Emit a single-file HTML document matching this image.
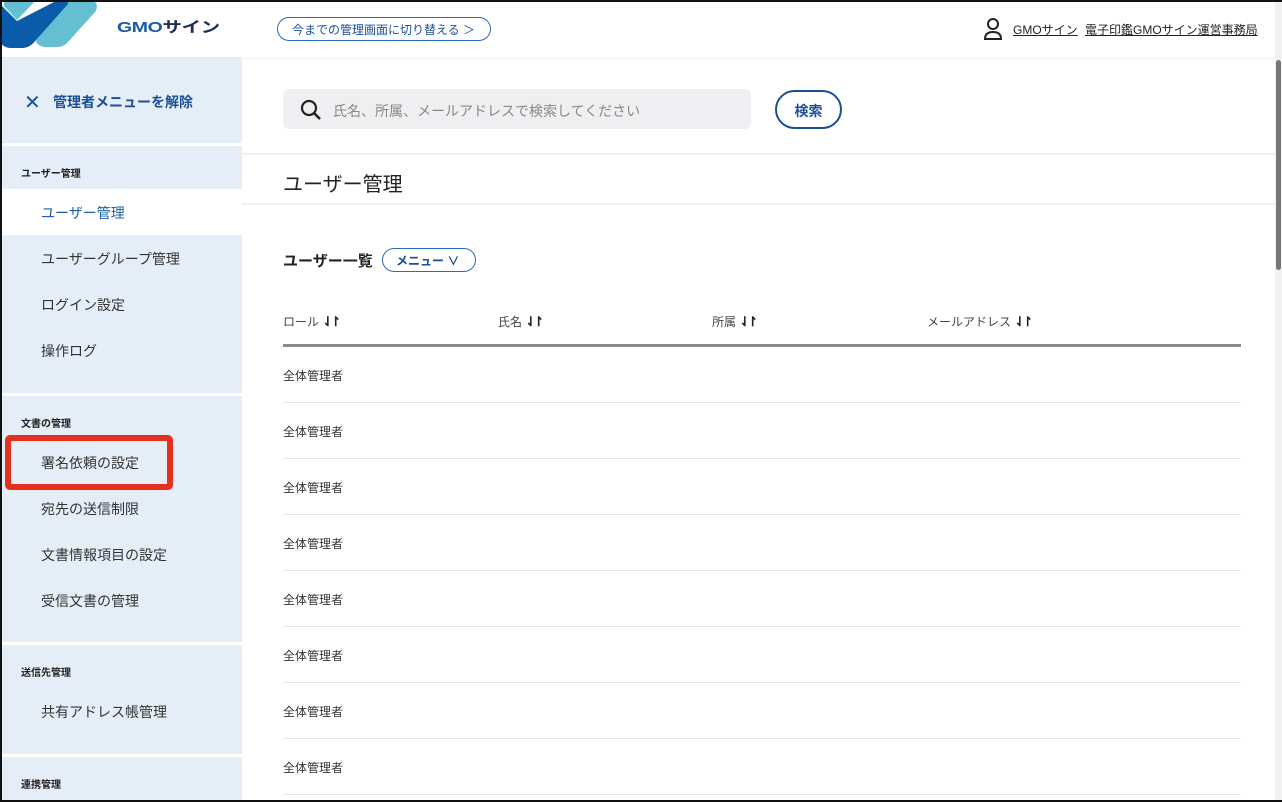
<!DOCTYPE html>
<html><head><meta charset="utf-8"><style>
*{box-sizing:border-box;margin:0;padding:0}
body{width:1282px;height:802px;overflow:hidden;background:#fff;font-family:"Liberation Sans","Noto Sans CJK JP",sans-serif;color:#222;position:relative}
.frame{position:absolute;inset:0;border:2px solid #111;border-right:none;pointer-events:none;z-index:10}
.hdr{position:absolute;left:0;top:0;width:1282px;height:57px;background:#fff;box-shadow:0 2px 4px rgba(0,0,0,.05)}
.side{position:absolute;left:0;top:57px;width:242px;height:745px;background:#e5eef7}
.sep{position:absolute;left:0;width:242px;height:3px;background:#fff}
.sh{position:absolute;left:21px;font-size:10px;font-weight:bold;color:#222}
.si{position:absolute;left:41px;font-size:14px;color:#333}
.row{position:absolute;left:283px;width:958px;border-bottom:1px solid #e6e6e6;height:56px}
.row span{position:absolute;left:0;top:20px;font-size:12px;color:#333}
.th{position:absolute;top:313px;font-size:12px;color:#444}
.th b{font-size:13px;color:#222;letter-spacing:-3px}
</style></head><body>
<div class="hdr">
<svg style="position:absolute;left:0;top:0" width="100" height="50" viewBox="0 0 100 50">
<path d="M66 0 L92 0 Q100 4 95 12 L68 42 Q64 47 56 47 L44 47 Q36 45 36 40 Z" fill="#63bfd1"/>
<path d="M4 0 L36 0 L17 20 L4 6 Z" fill="#63bfd1"/>
<path d="M0 4 L17 21 L58 0 L68 0 L68 4 L36 40 Q30 48 22 48 L10 48 Q0 47 0 38 Z" fill="#0a5ba8"/>
</svg>
<div style="position:absolute;left:117px;top:16px;font-size:15px;font-weight:bold;transform:scaleX(1.3);transform-origin:left;letter-spacing:-0.3px"><span style="color:#1a5aa8">GMO</span><span style="color:#1c2e55">サイン</span></div>
<div style="position:absolute;left:277px;top:17px;width:214px;height:24px;border:1.5px solid #2a6cb5;border-radius:12px;font-size:12px;color:#1a4f96;padding:3px 0 0 14px">今までの管理画面に切り替える ＞</div>
<svg style="position:absolute;left:983px;top:17px" width="20" height="24" viewBox="0 0 20 24"><circle cx="10" cy="7" r="5" fill="none" stroke="#222" stroke-width="2"/><path d="M2 22 Q2 15 10 15 Q18 15 18 22 Z" fill="none" stroke="#222" stroke-width="2"/></svg>
<div style="position:absolute;left:1013px;top:21px;font-size:12px;color:#222;text-decoration:underline">GMOサイン</div>
<div style="position:absolute;left:1085px;top:21px;font-size:12px;color:#222;text-decoration:underline">電子印鑑GMOサイン運営事務局</div>
</div>
<div style="position:absolute;right:0;top:0;width:7px;height:802px;background:#f1f1f1"><div style="position:absolute;left:1px;top:60px;width:5px;height:210px;background:#777;border-radius:3px"></div></div>
<div class="side">
<div style="position:absolute;left:24px;top:33px;font-size:20px;color:#1a4f96">✕</div>
<div style="position:absolute;left:53px;top:35px;font-size:14px;font-weight:bold;color:#1a4f96">管理者メニューを解除</div>
<div class="sep" style="top:86px"></div>
<div class="sh" style="top:108px">ユーザー管理</div>
<div style="position:absolute;left:0;top:132px;width:242px;height:46px;background:#fff"></div>
<div class="si" style="top:146px;color:#1a5fa8">ユーザー管理</div>
<div class="si" style="top:192px">ユーザーグループ管理</div>
<div class="si" style="top:238px">ログイン設定</div>
<div class="si" style="top:284px">操作ログ</div>
<div class="sep" style="top:336px"></div>
<div class="sh" style="top:358px">文書の管理</div>
<div class="si" style="top:396px">署名依頼の設定</div>
<div class="si" style="top:442px">宛先の送信制限</div>
<div class="si" style="top:488px">文書情報項目の設定</div>
<div class="si" style="top:534px">受信文書の管理</div>
<div class="sep" style="top:585px"></div>
<div class="sh" style="top:607px">送信先管理</div>
<div class="si" style="top:645px">共有アドレス帳管理</div>
<div class="sep" style="top:697px"></div>
<div class="sh" style="top:719px">連携管理</div>
</div>
<div style="position:absolute;left:5px;top:435px;width:168px;height:55px;border:6px solid #e3301f;border-radius:5px;z-index:5"></div>
<div style="position:absolute;left:283px;top:89px;width:468px;height:40px;background:#efeff1;border-radius:6px"></div>
<svg style="position:absolute;left:299px;top:98px" width="24" height="24" viewBox="0 0 24 24"><circle cx="10" cy="10" r="7" fill="none" stroke="#222" stroke-width="2.2"/><path d="M15 15 L21 21" stroke="#222" stroke-width="2.5"/></svg>
<div style="position:absolute;left:333px;top:101px;font-size:14px;color:#888">氏名、所属、メールアドレスで検索してください</div>
<div style="position:absolute;left:775px;top:90px;width:67px;height:39px;border:2px solid #1a4f96;border-radius:20px;font-size:14px;font-weight:bold;color:#1a4f96;text-align:center;padding-top:9px">検索</div>
<div style="position:absolute;left:242px;top:153px;width:1033px;height:2px;background:#eef0f2"></div>
<div style="position:absolute;left:283px;top:168px;font-size:20px;color:#222">ユーザー管理</div>
<div style="position:absolute;left:242px;top:203px;width:1033px;height:2px;background:#eef0f2"></div>
<div style="position:absolute;left:283px;top:250px;font-size:15px;font-weight:bold;color:#222">ユーザー一覧</div>
<div style="position:absolute;left:382px;top:248px;width:94px;height:24px;border:1.5px solid #2a6cb5;border-radius:12px;font-size:12px;font-weight:bold;color:#1a4f96;padding:3px 0 0 13px">メニュー ∨</div>
<div class="th" style="left:283px">ロール <b>⇃↾</b></div>
<div class="th" style="left:498px">氏名 <b>⇃↾</b></div>
<div class="th" style="left:712px">所属 <b>⇃↾</b></div>
<div class="th" style="left:927px">メールアドレス <b>⇃↾</b></div>
<div style="position:absolute;left:283px;top:344px;width:958px;height:3px;background:#8a8a8a"></div>
<div class="row" style="top:347px"><span>全体管理者</span></div>
<div class="row" style="top:403px"><span>全体管理者</span></div>
<div class="row" style="top:459px"><span>全体管理者</span></div>
<div class="row" style="top:515px"><span>全体管理者</span></div>
<div class="row" style="top:571px"><span>全体管理者</span></div>
<div class="row" style="top:627px"><span>全体管理者</span></div>
<div class="row" style="top:683px"><span>全体管理者</span></div>
<div class="row" style="top:739px"><span>全体管理者</span></div>
<div class="frame"></div>
</body></html>
